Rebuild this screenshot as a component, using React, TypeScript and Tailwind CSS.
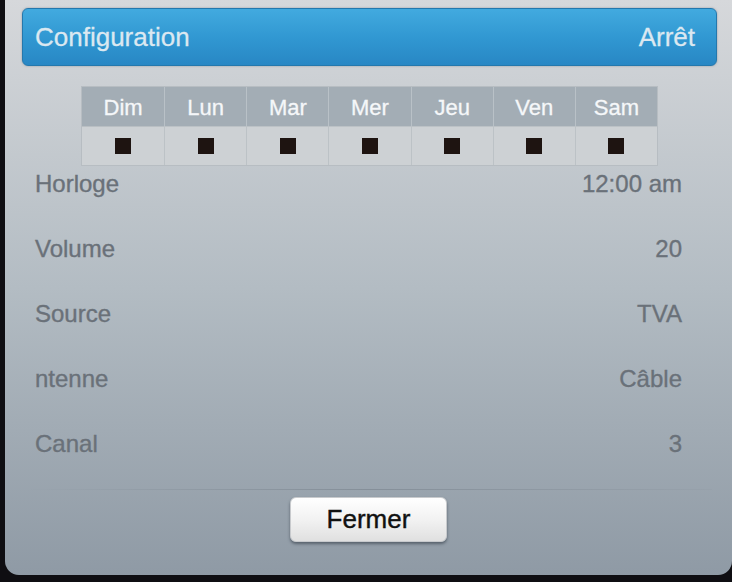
import React from "react";

const days = ["Dim", "Lun", "Mar", "Mer", "Jeu", "Ven", "Sam"];
const rows: [string, string][] = [
  ["Horloge", "12:00 am"],
  ["Volume", "20"],
  ["Source", "TVA"],
  ["ntenne", "Câble"],
  ["Canal", "3"],
];

export default function App() {
  return (
    <div
      className="w-[732px] h-[582px] bg-[#0f0e12] overflow-hidden"
      style={{ fontFamily: '"Liberation Sans", Arial, sans-serif' }}
    >
      <div className="ml-[5px] w-[727px] h-[575px] rounded-b-[14px] bg-gradient-to-b from-[#d6d8db] via-[#b3bcc3] to-[#8f9aa5] flex flex-col">
        <div className="pt-[8px] pl-[17px] pr-[15px]">
          <div className="h-[58px] rounded-[6px] border border-[#2478ad] bg-gradient-to-b from-[#42aadf] via-[#3198d2] to-[#2887c4] shadow-[0_0_2px_rgba(80,90,100,0.5)] flex items-center justify-between pl-[12px] pr-[21px] text-[26px] text-[#dbe8f1] [-webkit-text-stroke:0.3px_#dbe8f1]">
            <span>Configuration</span>
            <span>Arrêt</span>
          </div>
        </div>
        <div className="mt-[20px] ml-[76px] w-[577px] grid grid-cols-7 border border-[#b7bdc2]">
          {days.map((d, i) => (
            <div
              key={d}
              className={`h-[39px] bg-[#a3adb5] flex items-center justify-center pt-[2px] text-[22px] text-[#f5f7f9] [-webkit-text-stroke:0.3px_#f5f7f9] ${i > 0 ? "border-l border-[#b9c1c7]" : ""}`}
            >
              {d}
            </div>
          ))}
          {days.map((d, i) => (
            <div
              key={d + "c"}
              className={`h-[39px] bg-[#cdd1d4] border-t border-[#b9bfc3] flex items-center justify-center ${i > 0 ? "border-l border-[#bcc2c6]" : ""}`}
            >
              <div className="w-[16px] h-[16px] bg-[#1e1411]" />
            </div>
          ))}
        </div>
        <div className="flex flex-col pl-[30px] pr-[50px]">
          {rows.map(([k, v]) => (
            <div key={k} className="h-[65px] flex justify-between text-[24px] leading-[36px] text-[#6a7179] [-webkit-text-stroke:0.35px_#6a7179]">
              <span>{k}</span>
              <span>{v}</span>
            </div>
          ))}
        </div>
        <div className="-mt-[2px] h-px mx-[20px] bg-gradient-to-r from-transparent via-[#858f99] to-[#97a1ab]" />
        <div className="flex justify-center mt-[7px]">
          <button className="w-[157px] h-[45px] rounded-[6px] bg-gradient-to-b from-[#ffffff] via-[#f2f2f2] to-[#e0e0e0] border border-[#c8cacd] shadow-[0_2px_3px_rgba(40,50,60,0.55)] text-[26px] text-[#111111] [-webkit-text-stroke:0.4px_#111111] flex items-center justify-center">
            Fermer
          </button>
        </div>
      </div>
    </div>
  );
}
